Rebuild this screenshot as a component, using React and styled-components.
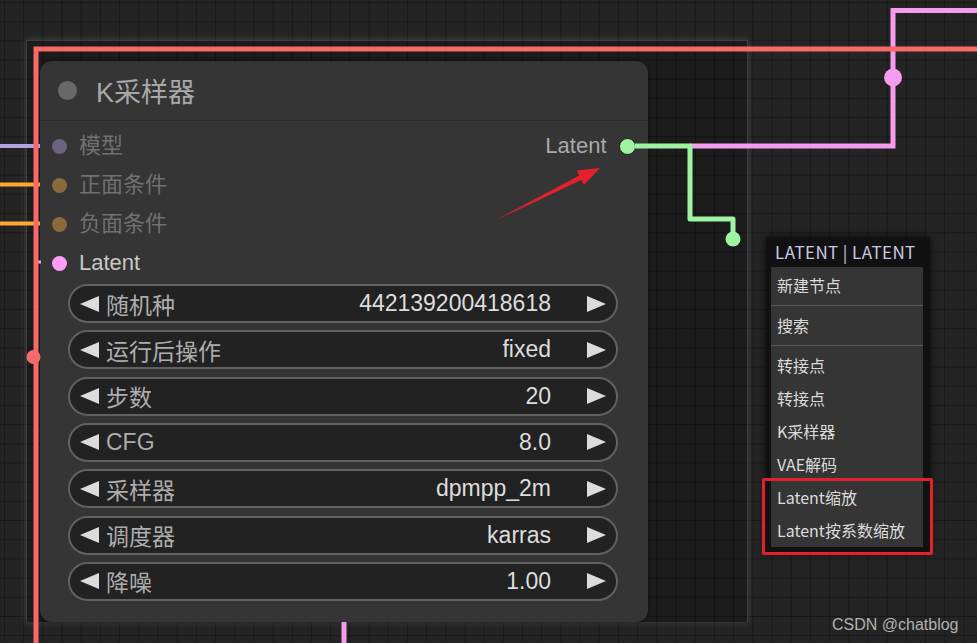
import React from "react"
import styled, { createGlobalStyle } from "styled-components"

const GlobalStyle = createGlobalStyle`
  html, body {
    margin: 0;
    padding: 0;
    background: #222;
  }
  body {
    font-family: "Liberation Sans", "Noto Sans CJK SC", sans-serif;
  }
`

const Canvas = styled.div`
  position: relative;
  width: 977px;
  height: 643px;
  overflow: hidden;
  background-color: #242424;
  background-image:
    linear-gradient(to right, rgba(0, 0, 0, 0.3) 1px, transparent 1px),
    linear-gradient(to bottom, rgba(0, 0, 0, 0.3) 1px, transparent 1px);
  background-size: 19.2px 19.2px;
  background-position: 4px 2px;
`

// selected frame around the node
const Frame = styled.div`
  position: absolute;
  left: 26px;
  top: 40px;
  width: 722px;
  height: 582px;
  box-sizing: border-box;
  padding: 20px 0 0 13px;
  display: flex;
  align-items: flex-start;
  background: rgba(0, 0, 0, 0.22);
  border: 1px solid #3e3e3e;
  border-bottom: none;
  box-shadow: 0 0 6px 1px rgba(255, 255, 255, 0.12);
`

const Node = styled.div`
  width: 608px;
  height: 561px;
  display: flex;
  flex-direction: column;
  background: #353535;
  border-radius: 12px;
  box-shadow: 0 0 4px rgba(0, 0, 0, 0.4);
`

const Title = styled.div`
  height: 59px;
  display: flex;
  align-items: center;
  gap: 19px;
  padding-left: 18px;
  border-bottom: 1px solid #2a2a2a;
`

const TitleDot = styled.span`
  width: 19px;
  height: 19px;
  border-radius: 50%;
  background: #686868;
`

const TitleText = styled.span`
  font-size: 27px;
  color: #a8a8a8;
`

const Body = styled.div`
  display: flex;
  flex-direction: column;
  padding: 5.5px 12.5px 0 12px;
`

const SlotRow = styled.div`
  height: 39px;
  display: flex;
  align-items: center;
  justify-content: space-between;
`

const Slot = styled.div`
  display: flex;
  align-items: center;
  gap: 12px;
`

const SlotDot = styled.span`
  width: ${({ size }) => size || 15}px;
  height: ${({ size }) => size || 15}px;
  box-sizing: border-box;
  border-radius: 50%;
  background: ${({ color }) => color};
  border: ${({ outlined }) => (outlined ? "1.5px solid #1b1b1b" : "none")};
`

const SlotLabel = styled.span`
  font-size: 22px;
  line-height: 26px;
  color: ${({ color }) => color};
`

const Widgets = styled.div`
  display: flex;
  flex-direction: column;
  gap: 7.33px;
  margin: 1.5px 17.5px 0 16px;
`

const Widget = styled.div`
  height: 39px;
  box-sizing: border-box;
  display: flex;
  align-items: center;
  padding: 0 10px;
  background: #222;
  border: 2px solid #616161;
  border-radius: 20px;
  font-size: 23px;
`

const ArrowLeft = styled.span`
  width: 0;
  height: 0;
  border-top: 8.5px solid transparent;
  border-bottom: 8.5px solid transparent;
  border-right: 19px solid #dcdcdc;
`

const ArrowRight = styled.span`
  width: 0;
  height: 0;
  border-top: 8.5px solid transparent;
  border-bottom: 8.5px solid transparent;
  border-left: 19px solid #dcdcdc;
`

const WidgetLabel = styled.span`
  flex: 1;
  margin-left: 7px;
  color: #adadad;
`

const WidgetValue = styled.span`
  margin-right: 36px;
  color: #dddddd;
`

const Links = styled.svg`
  position: absolute;
  left: 0;
  top: 0;
  pointer-events: none;
`

const Menu = styled.div`
  position: absolute;
  left: 766px;
  top: 237px;
  width: 164px;
  background: #111;
  box-shadow: 0 0 8px rgba(0, 0, 0, 0.7);
  font-family: "Noto Sans CJK SC", "Liberation Sans", sans-serif;
`

const MenuTitle = styled.div`
  height: 30px;
  line-height: 30px;
  padding-left: 9px;
  font-size: 17px;
  color: #c9c9e4;
  letter-spacing: 0.4px;
`

const MenuList = styled.div`
  margin: 0 7px 5px 5px;
  padding-top: 2px;
  background: #353535;
`

const MenuItem = styled.div`
  height: 33px;
  line-height: 33px;
  padding-left: 6px;
  font-size: 16px;
  color: #dcdcdc;
  white-space: nowrap;
`

const MenuSep = styled.div`
  height: 1px;
  margin: 3px 0;
  background: #5a5a5a;
`

const Highlight = styled.div`
  position: absolute;
  left: 762px;
  top: 478px;
  width: 171px;
  height: 77px;
  box-sizing: border-box;
  border: 3px solid #e3202c;
  border-radius: 2px;
`

const Watermark = styled.div`
  position: absolute;
  left: 832px;
  top: 615px;
  font-size: 16px;
  line-height: 20px;
  color: #b2b2b2;
`

const inputs = [
  { label: "模型", dot: "#6c6383", color: "#707070" },
  { label: "正面条件", dot: "#8a6a3b", color: "#707070" },
  { label: "负面条件", dot: "#8a6a3b", color: "#707070" },
  { label: "Latent", dot: "#ff9cf8", color: "#c8c8c8" },
]

const widgets = [
  ["随机种", "442139200418618"],
  ["运行后操作", "fixed"],
  ["步数", "20"],
  ["CFG", "8.0"],
  ["采样器", "dpmpp_2m"],
  ["调度器", "karras"],
  ["降噪", "1.00"],
]

const menuItems = [
  ["新建节点", true],
  ["搜索", true],
  ["转接点"],
  ["转接点"],
  ["K采样器"],
  ["VAE解码"],
  ["Latent缩放"],
  ["Latent按系数缩放"],
]

const App = () => {
  return (
    <>
      <GlobalStyle />
      <Canvas>
        <Frame>
          <Node>
            <Title>
              <TitleDot />
              <TitleText>K采样器</TitleText>
            </Title>
            <Body>
              {inputs.map((input, i) => (
                <SlotRow key={i}>
                  <Slot>
                    <SlotDot color={input.dot} />
                    <SlotLabel color={input.color}>{input.label}</SlotLabel>
                  </Slot>
                  {i === 0 && (
                    <Slot>
                      <SlotLabel color="#a9a9a9">Latent</SlotLabel>
                      <SlotDot color="#9ff59f" size={17} outlined />
                    </Slot>
                  )}
                </SlotRow>
              ))}
              <Widgets>
                {widgets.map(([label, value]) => (
                  <Widget key={label}>
                    <ArrowLeft />
                    <WidgetLabel>{label}</WidgetLabel>
                    <WidgetValue>{value}</WidgetValue>
                    <ArrowRight />
                  </Widget>
                ))}
              </Widgets>
            </Body>
          </Node>
        </Frame>

        <Links width="977" height="643" viewBox="0 0 977 643">
          <path d="M0 146 H40" stroke="#b3a3e3" strokeWidth="4" fill="none" />
          <path d="M0 184.5 H40 M0 223.5 H40" stroke="#ffa830" strokeWidth="4" fill="none" />
          <path d="M35 262 H41" stroke="#f89cf5" strokeWidth="3" fill="none" />
          <path d="M344 622 V643" stroke="#f59cf0" strokeWidth="5" fill="none" />
          <path d="M690 146 H893 V10.5 H977" stroke="#f59cf0" strokeWidth="5" fill="none" />
          <circle cx="893" cy="77.5" r="9" fill="#f59cf0" />
          <path d="M36 643 V49 H977" stroke="#f76a6a" strokeWidth="5" fill="none" />
          <circle cx="33.5" cy="357" r="7" fill="#f76a6a" />
          <path
            d="M635 146 H690 V219 H733 V239"
            stroke="#9ff59f"
            strokeWidth="5"
            fill="none"
            strokeLinejoin="round"
          />
          <circle cx="733" cy="239" r="7.5" fill="#9ff59f" />
          <polygon
            points="496,220 579.2,175.6 576.7,170.6 600,168 583.9,185 581.4,180"
            fill="#e5202a"
          />
        </Links>

        <Menu>
          <MenuTitle>LATENT | LATENT</MenuTitle>
          <MenuList>
            {menuItems.map(([label, sep], i) => (
              <React.Fragment key={i}>
                <MenuItem>{label}</MenuItem>
                {sep && <MenuSep />}
              </React.Fragment>
            ))}
          </MenuList>
        </Menu>
        <Highlight />
        <Watermark>CSDN @chatblog</Watermark>
      </Canvas>
    </>
  )
}

export default App
